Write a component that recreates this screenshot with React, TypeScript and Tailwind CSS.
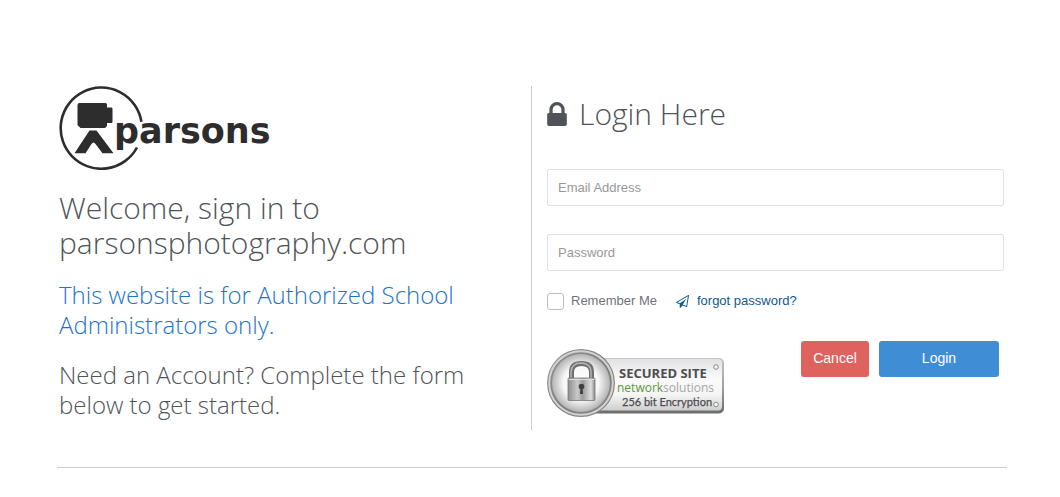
import React from "react";

function ParsonsLogo() {
  return (
    <svg
      role="img"
      aria-label="Parsons"
      viewBox="0 0 216 84"
      className="block h-[84px] w-[216px] max-w-full"
      fill="#2d2d2d"
    >
      <path
        d="M82.4 35.8A40.6 40.6 0 1 0 78 61.500"
        fill="none"
        stroke="#2d2d2d"
        strokeWidth="2.6"
      />
      <path d="M20.500 17H46.500Q48 17 48 18.500V21.500H52.500Q53.500 21.500 53.500 23V35.500Q53.500 37 52.500 37H48V40L46 42H21.500L18.500 39V19Q18.500 17 20.500 17Z" />
      <path d="M30.500 44.500H37.500L54.500 67.300H43.500L36.500 58Q34.500 55 32.500 58L26.500 67.300H15.500Z" />
      <text
        x="55"
        y="57"
        fontFamily="'DejaVu Sans', sans-serif"
        fontSize="35"
        fontWeight="700"
      >
        parsons
      </text>
    </svg>
  );
}

function LockIcon() {
  return (
    <svg
      aria-hidden="true"
      viewBox="0 128 1152 1408"
      className="h-6 w-5 shrink-0"
      fill="currentColor"
    >
      <path d="M320 768h512V576q0-106-75-181t-181-75-181 75-75 181v192zm832 96v576q0 40-28 68t-68 28H96q-40 0-68-28t-28-68V864q0-40 28-68t68-28h32V576q0-184 132-316t316-132 316 132 132 316v192h32q40 0 68 28t28 68z" />
    </svg>
  );
}

function PlaneIcon() {
  return (
    <svg
      aria-hidden="true"
      viewBox="0 0 1792 1792"
      className="h-[13px] w-[13px] shrink-0"
      fill="currentColor"
    >
      <path d="M1764 11q33 24 27 64l-256 1536q-5 29-32 45-14 8-31 8-11 0-24-5l-527-215-298 327q-18 21-47 21-14 0-23-4-19-7-30-23.500t-11-36.500v-452l-472-193q-37-14-40-55-3-39 32-59l1664-960q35-21 68 2zm-342 1499l221-1323-1434 827 336 137 863-639-478 797z" />
    </svg>
  );
}

function SecureBadge() {
  return (
    <svg
      role="img"
      aria-label="Secured site, Network Solutions, 256 bit encryption"
      viewBox="0 0 178 68"
      className="block h-[68px] w-[178px] shrink-0"
    >
      <defs>
        <linearGradient id="plate" x1="0" y1="0" x2="0" y2="1">
          <stop offset="0" stopColor="#e2e2e4" />
          <stop offset="0.400" stopColor="#fbfbfb" />
          <stop offset="0.700" stopColor="#f4f4f4" />
          <stop offset="1" stopColor="#cfcfcf" />
        </linearGradient>
        <linearGradient id="edge" x1="0" y1="0" x2="0" y2="1">
          <stop offset="0" stopColor="#c4c4c6" />
          <stop offset="0.500" stopColor="#a2a2a2" />
          <stop offset="1" stopColor="#6c6c6c" />
        </linearGradient>
        <linearGradient id="ring" x1="0" y1="0" x2="1" y2="1">
          <stop offset="0" stopColor="#9a9a9a" />
          <stop offset="0.500" stopColor="#7d7d7d" />
          <stop offset="1" stopColor="#8c8c8c" />
        </linearGradient>
        <radialGradient id="dial">
          <stop offset="0" stopColor="#ffffff" />
          <stop offset="0.600" stopColor="#f8f8f8" />
          <stop offset="1" stopColor="#b4b4b4" />
        </radialGradient>
        <linearGradient id="body" x1="0" y1="0" x2="1" y2="0">
          <stop offset="0" stopColor="#8e8e8e" />
          <stop offset="0.350" stopColor="#c9c9c9" />
          <stop offset="0.550" stopColor="#9c9c9c" />
          <stop offset="0.850" stopColor="#dedede" />
          <stop offset="1" stopColor="#8a8a8a" />
        </linearGradient>
      </defs>
      <rect x="34" y="9" width="143" height="55.500" rx="5" fill="url(#edge)" />
      <rect x="35" y="10" width="140" height="51.500" rx="4" fill="url(#plate)" />
      <circle cx="34" cy="34" r="34" fill="url(#ring)" />
      <circle cx="34" cy="34" r="31.800" fill="none" stroke="#d2d2d2" strokeWidth="2" />
      <circle cx="34" cy="34" r="29" fill="url(#dial)" />
      <path
        d="M24.500 31V23Q24.500 14.500 34.500 14.500T44.500 23V31"
        fill="none"
        stroke="#6f6f6f"
        strokeWidth="5"
      />
      <path
        d="M24 30V23Q24.500 14 34.500 14Q44 14.500 44 23V30"
        fill="none"
        stroke="#b5b5b5"
        strokeWidth="1.500"
      />
      <rect x="21" y="29" width="27" height="22.500" rx="1" fill="url(#body)" stroke="#777777" strokeWidth="0.800" />
      <path d="M21.500 30.500H47.500" stroke="#dddddd" strokeWidth="1" />
      <circle cx="34.500" cy="37.500" r="2.800" fill="#3f3f3f" />
      <path d="M33.500 38H35.500L36 45H33Z" fill="#3f3f3f" />
      <circle cx="169" cy="18" r="2.300" fill="#f4f4f4" stroke="#8a8a8a" strokeWidth="1" />
      <circle cx="169" cy="55.500" r="2.300" fill="#f4f4f4" stroke="#8a8a8a" strokeWidth="1" />
      <text x="72" y="29" fill="#4d4d4f" fontFamily="'Open Sans', sans-serif" fontSize="13" fontWeight="700">
        SECURED SITE
      </text>
      <text x="70" y="43" fill="#5b9a37" fontFamily="'Open Sans', sans-serif" fontSize="12" fontWeight="500">
        network<tspan fill="#a6a6a8" fontWeight="400">solutions</tspan>
      </text>
      <text x="75" y="57" fill="#4d4d4f" fontFamily="Lato, sans-serif" fontSize="11" fontWeight="400" stroke="#4d4d4f" strokeWidth="0.250">
        256 bit Encryption
      </text>
    </svg>
  );
}

const fieldClass =
  "block h-[37px] w-full rounded-xs border border-[#e2e2e2] bg-white px-[10px] text-[13px] text-[#555] placeholder:text-[#999] focus:outline-none focus:border-[#3f8ed5]";

export default function App() {
  return (
    <main className="bg-white pr-[53px] pl-[57px] pt-[86px] font-['Liberation_Sans',Arial,sans-serif] text-[13px] text-[#505458]">
      <div className="grid grid-cols-2 border-b border-[#cccccc] pb-[37px]">
        <section className="border-r border-[#cccccc] pb-[10px] pl-[2px] font-['Open_Sans',sans-serif] font-light">
          <ParsonsLogo />
          <h1 className="mt-5 text-[30px] leading-[35px]">
            Welcome, sign in to
            <br />
            parsonsphotography.com
          </h1>
          <p className="mt-5 text-[24px] leading-[30px] text-[#1c74cc]">
            This website is for Authorized School
            <br />
            Administrators only.
          </p>
          <p className="mt-5 text-[24px] leading-[30px]">
            Need an Account? Complete the form
            <br />
            below to get started.
          </p>
        </section>

        <form
          className="pl-[15px] pr-[3px]"
          onSubmit={(event) => event.preventDefault()}
        >
          <h2 className="flex items-center gap-3 pt-[10px] font-['Open_Sans',sans-serif] text-[30px] leading-[35px] font-light">
            <LockIcon />
            Login Here
          </h2>
          <input
            type="email"
            aria-label="Email Address"
            placeholder="Email Address"
            className={`${fieldClass} mt-[38px]`}
          />
          <input
            type="password"
            aria-label="Password"
            placeholder="Password"
            className={`${fieldClass} mt-7`}
          />
          <div className="mt-5 flex h-5 items-center">
            <input
              id="remember"
              type="checkbox"
              className="h-[17px] w-[17px] appearance-none rounded-[3px] border border-[#b9bec5] bg-white checked:bg-[#3f8ed5]"
            />
            <label htmlFor="remember" className="ml-[7px] text-[#6f7379]">
              Remember Me
            </label>
            <a href="#forgot" className="ml-[19px] flex items-center gap-2 text-[#0d5a8f]">
              <PlaneIcon />
              forgot password?
            </a>
          </div>
          <div className="mt-[30px] flex items-start justify-between">
            <div className="pt-2">
              <SecureBadge />
            </div>
            <div className="flex gap-[10px] pr-[5px] text-[14px] text-white">
              <button type="button" className="h-9 w-[68px] rounded-[3px] bg-[#e0625e] pb-[2px]">
                Cancel
              </button>
              <button type="submit" className="h-9 w-[120px] rounded-[3px] bg-[#3f8ed5] pb-[2px]">
                Login
              </button>
            </div>
          </div>
        </form>
      </div>
    </main>
  );
}
